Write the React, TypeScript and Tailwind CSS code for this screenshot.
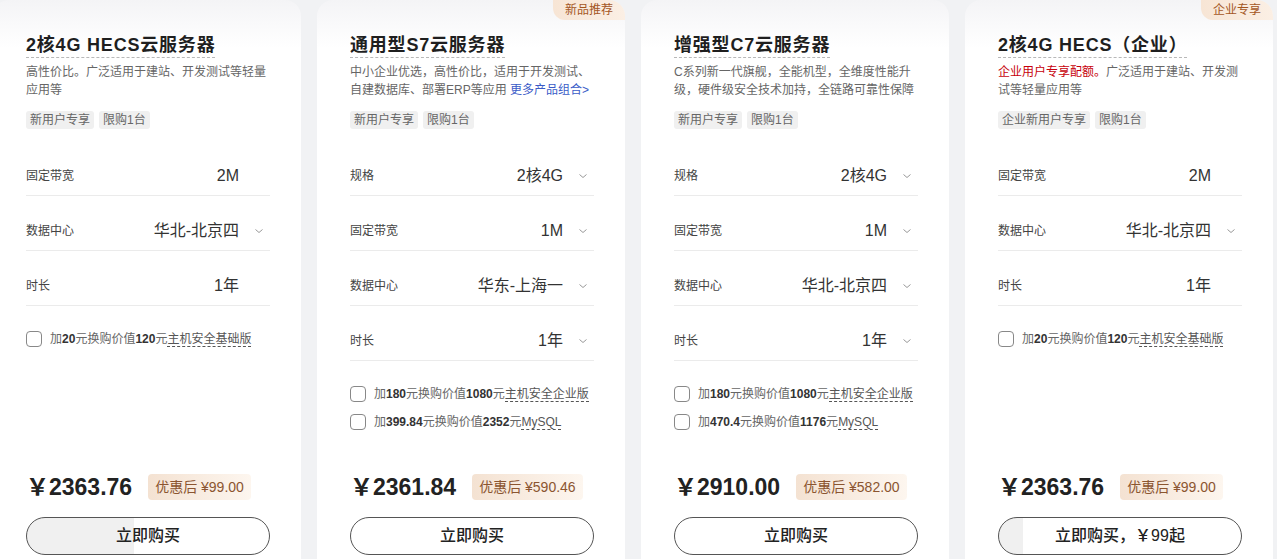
import React from 'react'

type Row = { label: string; value: string; select?: boolean }
type Addon = { pre: string; a: string; mid: string; b: string; unit: string; name: string }
type Card = {
  title: string
  desc: React.ReactNode
  tags: string[]
  badge?: string
  rows: Row[]
  addons: Addon[]
  price: string
  promo: string
  cta: string
  fill: number
}

const cards: Card[] = [
  {
    title: '2核4G HECS云服务器',
    desc: '高性价比。广泛适用于建站、开发测试等轻量应用等',
    tags: ['新用户专享', '限购1台'],
    rows: [
      { label: '固定带宽', value: '2M' },
      { label: '数据中心', value: '华北-北京四', select: true },
      { label: '时长', value: '1年' },
    ],
    addons: [{ pre: '加', a: '20', mid: '元换购价值', b: '120', unit: '元', name: '主机安全基础版' }],
    price: '2363.76',
    promo: '¥99.00',
    cta: '立即购买',
    fill: 107,
  },
  {
    title: '通用型S7云服务器',
    desc: (
      <>
        中小企业优选，高性价比，适用于开发测试、自建数据库、部署ERP等应用{' '}
        <span className="text-[#3a5bc7]">更多产品组合&gt;</span>
      </>
    ),
    tags: ['新用户专享', '限购1台'],
    badge: '新品推荐',
    rows: [
      { label: '规格', value: '2核4G', select: true },
      { label: '固定带宽', value: '1M', select: true },
      { label: '数据中心', value: '华东-上海一', select: true },
      { label: '时长', value: '1年', select: true },
    ],
    addons: [
      { pre: '加', a: '180', mid: '元换购价值', b: '1080', unit: '元', name: '主机安全企业版' },
      { pre: '加', a: '399.84', mid: '元换购价值', b: '2352', unit: '元', name: 'MySQL' },
    ],
    price: '2361.84',
    promo: '¥590.46',
    cta: '立即购买',
    fill: 0,
  },
  {
    title: '增强型C7云服务器',
    desc: 'C系列新一代旗舰，全能机型，全维度性能升级，硬件级安全技术加持，全链路可靠性保障',
    tags: ['新用户专享', '限购1台'],
    rows: [
      { label: '规格', value: '2核4G', select: true },
      { label: '固定带宽', value: '1M', select: true },
      { label: '数据中心', value: '华北-北京四', select: true },
      { label: '时长', value: '1年', select: true },
    ],
    addons: [
      { pre: '加', a: '180', mid: '元换购价值', b: '1080', unit: '元', name: '主机安全企业版' },
      { pre: '加', a: '470.4', mid: '元换购价值', b: '1176', unit: '元', name: 'MySQL' },
    ],
    price: '2910.00',
    promo: '¥582.00',
    cta: '立即购买',
    fill: 0,
  },
  {
    title: '2核4G HECS（企业）',
    desc: (
      <>
        <span className="text-[#c7000b]">企业用户专享配额。</span>广泛适用于建站、开发测试等轻量应用等
      </>
    ),
    tags: ['企业新用户专享', '限购1台'],
    badge: '企业专享',
    rows: [
      { label: '固定带宽', value: '2M' },
      { label: '数据中心', value: '华北-北京四', select: true },
      { label: '时长', value: '1年' },
    ],
    addons: [{ pre: '加', a: '20', mid: '元换购价值', b: '120', unit: '元', name: '主机安全基础版' }],
    price: '2363.76',
    promo: '¥99.00',
    cta: '立即购买，￥99起',
    fill: 24,
  },
]

function Chevron() {
  return (
    <svg width="10" height="6" viewBox="0 0 10 6" fill="none">
      <polyline points="1.5,1.5 5,4.5 8.5,1.5" stroke="#999" strokeWidth="1" />
    </svg>
  )
}

function ProductCard({ c }: { c: Card }) {
  return (
    <div className="relative flex h-[580px] w-[308px] shrink-0 flex-col rounded-[16px] bg-[linear-gradient(180deg,#f4f4f6_0px,#ffffff_48px)] pb-[25px] pl-[33px] pr-[31px] pt-[33px]">
      {c.badge && (
        <div className="absolute right-0 top-0 flex h-[20px] items-center rounded-bl-[12px] rounded-tr-[16px] bg-[linear-gradient(90deg,#f7e5d5,#fbefe4)] px-[12px] text-[12px] text-[#a4561f]">
          {c.badge}
        </div>
      )}
      <div>
        <h3 className="inline-block border-b border-dashed border-[#b8b8b8] text-[18px] font-bold leading-[24px] tracking-[0.8px] text-[#1f1f1f]">
          {c.title}
        </h3>
      </div>
      <p className="mt-[5px] h-[36px] text-[12px] leading-[18px] text-[#666]">{c.desc}</p>
      <div className="mt-[12px] flex gap-[5px]">
        {c.tags.map(t => (
          <span key={t} className="rounded-[3px] bg-[#f0f0f0] px-[4px] text-[12px] leading-[18px] text-[#666]">{t}</span>
        ))}
      </div>
      <div className="mt-[12px]">
        {c.rows.map(r => (
          <div key={r.label} className="flex h-[55px] items-center border-b border-[#ebebeb] pt-[15px]">
            <span className="text-[12px] text-[#444]">{r.label}</span>
            <span className="ml-auto text-[16px] text-[#333]">{r.value}</span>
            <span className="flex w-[31px] justify-end pr-[6px]">{r.select && <Chevron />}</span>
          </div>
        ))}
      </div>
      <div className="mt-[25px] flex flex-col gap-[12px]">
        {c.addons.map(a => (
          <label key={a.name} className="flex items-center gap-[8px] text-[12px] leading-[16px] text-[#666]">
            <span className="h-[16px] w-[16px] rounded-[4px] border border-[#888] bg-white" />
            <span>
              {a.pre}<b className="text-[#333]">{a.a}</b>{a.mid}<b className="text-[#333]">{a.b}</b>{a.unit}
              <span className="border-b border-dashed border-[#555] text-[#555]">{a.name}</span>
            </span>
          </label>
        ))}
      </div>
      <div className="mt-auto flex items-center">
        <span className="text-[23px] font-bold leading-[26px] text-[#222]">￥{c.price}</span>
        <span className="ml-[16px] rounded-[4px] bg-[linear-gradient(90deg,#f4e2d2,#fdf6ef)] px-[7px] text-[14px] leading-[26px] text-[#8b5530]">
          优惠后 {c.promo}
        </span>
      </div>
      <button
        className="mt-[17px] h-[38px] w-full rounded-full border border-[#555] text-[16px] font-medium text-[#222]"
        style={{ background: `linear-gradient(90deg,#f0f0f0 0px,#f0f0f0 ${c.fill}px,#ffffff ${c.fill}px)` }}
      >
        {c.cta}
      </button>
    </div>
  )
}

export default function App() {
  return (
    <div className="h-[559px] overflow-hidden bg-[#f1f2f4] font-['Liberation_Sans','Noto_Sans_CJK_SC',sans-serif]">
      <div className="-ml-[7px] flex gap-[16px]">
        {cards.map(c => (
          <ProductCard key={c.title} c={c} />
        ))}
      </div>
    </div>
  )
}
